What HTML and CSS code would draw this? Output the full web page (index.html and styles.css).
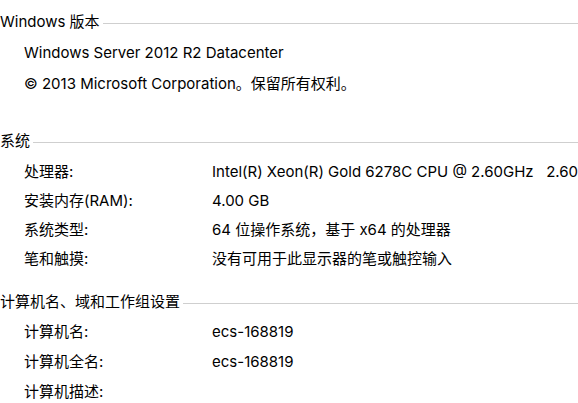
FILE: index.html
```html
<html>
<head>
  <meta charset="utf-8">
  <link rel="stylesheet" href="styles.css">
</head>
<body>
  <div class="page">
    <section class="group group-edition">
      <h2 class="group-head"><span>Windows 版本</span></h2>
      <div class="rows rows-edition">
        <div class="row"><span class="full">Windows Server 2012 R2 Datacenter</span></div>
        <div class="row"><span class="full">© 2013 Microsoft Corporation。保留所有权利。</span></div>
      </div>
    </section>

    <section class="group group-system">
      <h2 class="group-head"><span>系统</span></h2>
      <div class="rows">
        <div class="row"><span class="label">处理器:</span><span class="value">Intel(R) Xeon(R) Gold 6278C CPU @ 2.60GHz &nbsp; 2.60</span></div>
        <div class="row"><span class="label">安装内存(RAM):</span><span class="value">4.00 GB</span></div>
        <div class="row"><span class="label">系统类型:</span><span class="value">64 位操作系统，基于 x64 的处理器</span></div>
        <div class="row"><span class="label">笔和触摸:</span><span class="value">没有可用于此显示器的笔或触控输入</span></div>
      </div>
    </section>

    <section class="group group-computer">
      <h2 class="group-head"><span>计算机名、域和工作组设置</span></h2>
      <div class="rows rows-computer">
        <div class="row"><span class="label">计算机名:</span><span class="value">ecs-168819</span></div>
        <div class="row"><span class="label">计算机全名:</span><span class="value">ecs-168819</span></div>
        <div class="row"><span class="label">计算机描述:</span><span class="value"></span></div>
      </div>
    </section>
  </div>
</body>
</html>
```

FILE: styles.css
```css
body {
  margin: 0;
  background: #fff;
  color: #000;
  font: 400 15px/29px Inter, "Noto Sans CJK SC", sans-serif;
  overflow: hidden;
}
.page {
  padding-top: 12px;
  width: 578px;
}
.group-system {
  margin-top: 33px;
}
.group-computer {
  margin-top: 19px;
}
.group-head {
  display: flex;
  align-items: center;
  height: 20px;
  margin: 0;
  font-size: 15px;
  font-weight: 400;
  line-height: 20px;
  white-space: nowrap;
}
.group-head::after {
  content: "";
  flex: 1;
  height: 1px;
  margin: 2px 0 0 3px;
  background: #cfcfcf;
}
.rows {
  display: flex;
  flex-direction: column;
  margin-top: 6px;
  padding-left: 24px;
}
.rows-edition {
  gap: 2px;
}
.rows-computer {
  margin-top: 5px;
  gap: 1px;
}
.row {
  display: grid;
  grid-template-columns: 188px 1fr;
  height: 29px;
  white-space: nowrap;
  overflow: hidden;
}
.row .full {
  grid-column: 1 / 3;
}
```
